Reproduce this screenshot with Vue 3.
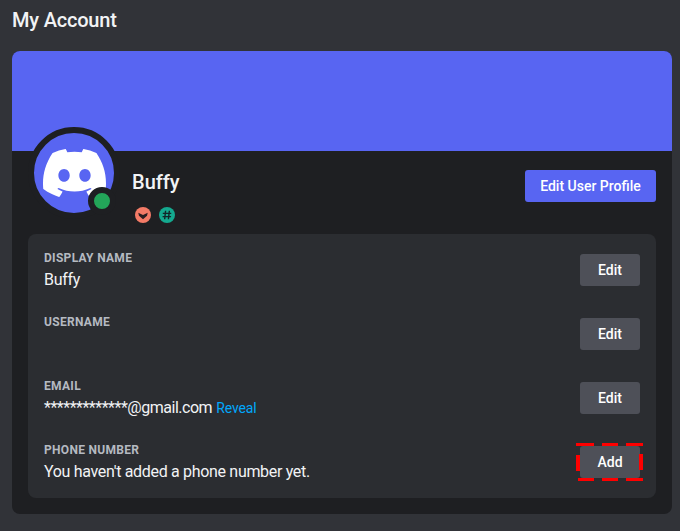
<template>
  <div class="page">
    <h1 class="title">My Account</h1>

    <div class="card">
      <div class="banner"></div>

      <div class="header">
        <div class="avatar">
          <svg class="logo" viewBox="0 3 24 18" width="63" height="48">
            <path fill="#fff" :d="discordPath" />
          </svg>
          <span class="status"></span>
        </div>
        <div class="who">
          <div class="name">Buffy</div>
          <div class="badges">
            <svg width="16" height="16" viewBox="0 0 17 17">
              <circle cx="8.5" cy="8.5" r="8.5" fill="#f47b67" />
              <path d="M3.5 6 8.5 8.5 13.5 6 12.8 9.2 8.5 13 4.2 9.2Z" fill="#2b1f22" />
            </svg>
            <svg width="16" height="16" viewBox="0 0 17 17">
              <circle cx="8.5" cy="8.5" r="8.5" fill="#14a98f" />
              <path d="M7 4 6 13M11 4 10 13M4 6.8H13M3.8 10.2H12.8" stroke="#12262a" stroke-width="1.5" fill="none" />
            </svg>
          </div>
        </div>
        <button class="btn primary">Edit User Profile</button>
      </div>

      <div class="fields">
        <div v-for="f in fields" :key="f.label" class="row">
          <div class="info">
            <div class="label">{{ f.label }}</div>
            <div class="value" :class="{ tight: f.reveal }">{{ f.value }}<a v-if="f.reveal" class="reveal">Reveal</a></div>
          </div>
          <button class="btn">
            {{ f.action }}
            <svg v-if="f.action === 'Add'" class="dashes" width="67" height="38" viewBox="0 0 67 38">
              <path d="M0 1.5H18M26 1.5H42M50 1.5H67M2 36.5H18M26 36.5H42M50 36.5H67" stroke="#f00" stroke-width="3" />
              <path d="M2 12V28M65 11V27" stroke="#f00" stroke-width="4" />
            </svg>
          </button>
        </div>
      </div>
    </div>
  </div>
</template>

<script setup>
const discordPath = 'M20.317 4.3698a19.7913 19.7913 0 00-4.8851-1.5152.0741.0741 0 00-.0785.0371c-.211.3753-.4447.8648-.6083 1.2495-1.8447-.2762-3.68-.2762-5.4868 0-.1636-.3933-.4058-.8742-.6177-1.2495a.077.077 0 00-.0785-.037 19.7363 19.7363 0 00-4.8852 1.515.0699.0699 0 00-.0321.0277C.5334 9.0458-.319 13.5799.0992 18.0578a.0824.0824 0 00.0312.0561c2.0528 1.5076 4.0413 2.4228 5.9929 3.0294a.0777.0777 0 00.0842-.0276c.4616-.6304.8731-1.2952 1.226-1.9942a.076.076 0 00-.0416-.1057c-.6528-.2476-1.2743-.5495-1.8722-.8923a.077.077 0 01-.0076-.1277c.1258-.0943.2517-.1923.3718-.2914a.0743.0743 0 01.0776-.0105c3.9278 1.7933 8.18 1.7933 12.0614 0a.0739.0739 0 01.0785.0095c.1202.099.246.1981.3728.2924a.077.077 0 01-.0066.1276 12.2986 12.2986 0 01-1.873.8914.0766.0766 0 00-.0407.1067c.3604.698.7719 1.3628 1.225 1.9932a.076.076 0 00.0842.0286c1.961-.6067 3.9495-1.5219 6.0023-3.0294a.077.077 0 00.0313-.0552c.5004-5.177-.8382-9.6739-3.5485-13.6604a.061.061 0 00-.0312-.0286zM8.02 15.3312c-1.1825 0-2.1569-1.0857-2.1569-2.419 0-1.3332.9555-2.4189 2.157-2.4189 1.2108 0 2.1757 1.0952 2.1568 2.419 0 1.3332-.9555 2.4189-2.1569 2.4189zm7.9748 0c-1.1825 0-2.1569-1.0857-2.1569-2.419 0-1.3332.9554-2.4189 2.1569-2.4189 1.2108 0 2.1757 1.0952 2.1568 2.419 0 1.3332-.946 2.4189-2.1568 2.4189Z'

const fields = [
  { label: 'Display Name', value: 'Buffy', action: 'Edit' },
  { label: 'Username', value: '', action: 'Edit' },
  { label: 'Email', value: '*************@gmail.com', reveal: true, action: 'Edit' },
  { label: 'Phone Number', value: "You haven't added a phone number yet.", action: 'Add' },
]
</script>

<style>
body {
  background: #313338;
}
</style>

<style scoped>
.page {
  width: 680px;
  height: 531px;
  box-sizing: border-box;
  padding: 0 8px 0 12px;
  background: #313338;
  font-family: Roboto, "Liberation Sans", sans-serif;
  color: #f2f3f5;
  overflow: hidden;
}

.title {
  margin: 0;
  height: 51px;
  padding-top: 8px;
  box-sizing: border-box;
  font-size: 20px;
  line-height: 24px;
  font-weight: 500;
  letter-spacing: -0.2px;
}

.card {
  background: #1e1f22;
  border-radius: 8px;
  overflow: hidden;
  padding-bottom: 16px;
}

.banner {
  height: 100px;
  background: #5865f2;
}

.header {
  position: relative;
  height: 83px;
  display: flex;
  justify-content: space-between;
  padding: 19px 16px 0 120px;
  box-sizing: border-box;
}

.avatar {
  position: absolute;
  left: 16px;
  top: -24px;
  width: 80px;
  height: 80px;
  border: 6px solid #1e1f22;
  border-radius: 50%;
  background: #5865f2;
  display: flex;
  align-items: center;
  justify-content: center;
}

.status {
  position: absolute;
  left: 54px;
  top: 54px;
  width: 16px;
  height: 16px;
  border: 6px solid #1e1f22;
  border-radius: 50%;
  background: #23a559;
}

.name {
  font-size: 20px;
  line-height: 24px;
  font-weight: 500;
}

.badges {
  display: flex;
  gap: 8px;
  margin-top: 13px;
  margin-left: 3px;
}

.btn {
  position: relative;
  height: 32px;
  width: 60px;
  padding: 0;
  border: 0;
  border-radius: 3px;
  background: #4e5058;
  color: #fff;
  font: 500 14px/16px Roboto, "Liberation Sans", sans-serif;
}

.btn.primary {
  width: 131px;
  background: #5865f2;
}

.dashes {
  position: absolute;
  left: -4px;
  top: -3px;
}

.fields {
  margin: 0 16px;
  padding: 16px;
  border-radius: 8px;
  background: #2b2d31;
  display: flex;
  flex-direction: column;
  gap: 24px;
}

.row {
  height: 40px;
  display: flex;
  align-items: center;
  justify-content: space-between;
}

.info {
  height: 40px;
}

.label {
  font-size: 12px;
  line-height: 16px;
  font-weight: 700;
  letter-spacing: 0.3px;
  text-transform: uppercase;
  color: #b5bac1;
}

.value {
  font-size: 16px;
  line-height: 24px;
  height: 24px;
  margin-top: 2px;
  letter-spacing: -0.32px;
  color: #f2f3f5;
}

.value.tight {
  letter-spacing: -0.48px;
}

.reveal {
  margin-left: 4px;
  font-size: 14px;
  letter-spacing: -0.1px;
  color: #00a8fc;
}
</style>
